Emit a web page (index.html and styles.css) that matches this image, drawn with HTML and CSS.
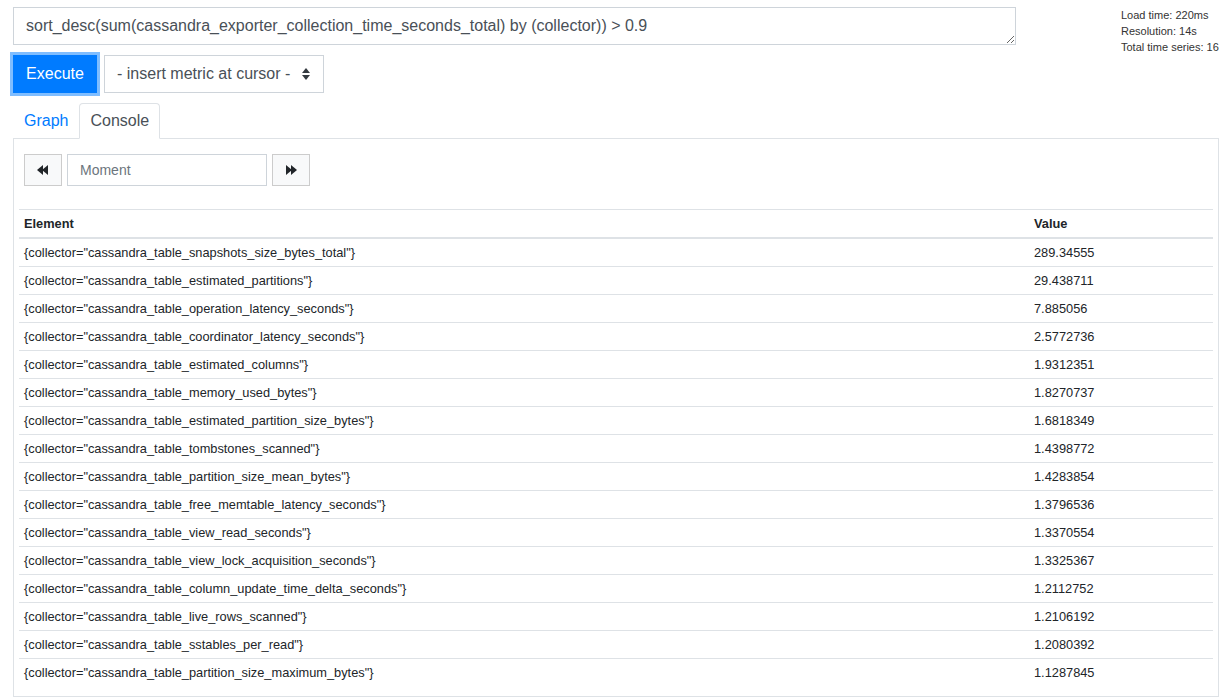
FILE: index.html
```html
<!DOCTYPE html>
<html lang="en">
  <head>
    <meta charset="utf-8">
    <title>Prometheus Time Series Collection and Processing Server</title>
    <link rel="stylesheet" href="styles.css">
  </head>
  <body>
    <div class="query-row">
      <div class="query-main">
        <textarea class="form-control expression" rows="1">sort_desc(sum(cassandra_exporter_collection_time_seconds_total) by (collector)) &gt; 0.9</textarea>
        <div class="query-actions">
          <button class="btn btn-primary execute">Execute</button>
          <div class="select-wrap">
            <select class="form-control metric-select">
              <option>- insert metric at cursor -</option>
            </select>
            <svg class="select-arrows" width="8" height="12" viewBox="0 0 8 12">
              <polygon points="4,0 8,5 0,5" fill="#343a40"/>
              <polygon points="0,7 8,7 4,12" fill="#343a40"/>
            </svg>
          </div>
        </div>
      </div>
      <div class="eval-stats">
        <div>Load time: 220ms</div>
        <div>Resolution: 14s</div>
        <div>Total time series: 16</div>
      </div>
    </div>

    <ul class="nav-tabs">
      <li><a class="nav-link" href="#graph">Graph</a></li>
      <li><a class="nav-link active" href="#console">Console</a></li>
    </ul>

    <div class="tab-content">
      <div class="moment-controls">
        <button class="btn btn-light nav-btn" title="Rewind the time">
          <svg width="12" height="10" viewBox="0 0 12 10">
            <polygon points="0,5 6,0 6,10" fill="#212529"/>
            <polygon points="5,5 11,0 11,10" fill="#212529"/>
          </svg>
        </button>
        <input class="form-control moment-input" placeholder="Moment">
        <button class="btn btn-light nav-btn" title="Advance the time">
          <svg width="12" height="10" viewBox="0 0 12 10">
            <polygon points="1,0 7,5 1,10" fill="#212529"/>
            <polygon points="6,0 12,5 6,10" fill="#212529"/>
          </svg>
        </button>
      </div>

      <table class="table">
        <thead>
          <tr><th>Element</th><th class="value-col">Value</th></tr>
        </thead>
        <tbody>
          <tr><td>{collector="cassandra_table_snapshots_size_bytes_total"}</td><td>289.34555</td></tr>
          <tr><td>{collector="cassandra_table_estimated_partitions"}</td><td>29.438711</td></tr>
          <tr><td>{collector="cassandra_table_operation_latency_seconds"}</td><td>7.885056</td></tr>
          <tr><td>{collector="cassandra_table_coordinator_latency_seconds"}</td><td>2.5772736</td></tr>
          <tr><td>{collector="cassandra_table_estimated_columns"}</td><td>1.9312351</td></tr>
          <tr><td>{collector="cassandra_table_memory_used_bytes"}</td><td>1.8270737</td></tr>
          <tr><td>{collector="cassandra_table_estimated_partition_size_bytes"}</td><td>1.6818349</td></tr>
          <tr><td>{collector="cassandra_table_tombstones_scanned"}</td><td>1.4398772</td></tr>
          <tr><td>{collector="cassandra_table_partition_size_mean_bytes"}</td><td>1.4283854</td></tr>
          <tr><td>{collector="cassandra_table_free_memtable_latency_seconds"}</td><td>1.3796536</td></tr>
          <tr><td>{collector="cassandra_table_view_read_seconds"}</td><td>1.3370554</td></tr>
          <tr><td>{collector="cassandra_table_view_lock_acquisition_seconds"}</td><td>1.3325367</td></tr>
          <tr><td>{collector="cassandra_table_column_update_time_delta_seconds"}</td><td>1.2112752</td></tr>
          <tr><td>{collector="cassandra_table_live_rows_scanned"}</td><td>1.2106192</td></tr>
          <tr><td>{collector="cassandra_table_sstables_per_read"}</td><td>1.2080392</td></tr>
          <tr><td>{collector="cassandra_table_partition_size_maximum_bytes"}</td><td>1.1287845</td></tr>
        </tbody>
      </table>
    </div>
  </body>
</html>
```

FILE: styles.css
```css
* {
  box-sizing: border-box;
}
body {
  margin: 0;
  padding: 7px 5px 0 13px;
  font-family: 'Liberation Sans', Helvetica, Arial, sans-serif;
  font-size: 16px;
  line-height: 1.5;
  color: #212529;
  background-color: #fff;
}

.query-row {
  display: grid;
  grid-template-columns: 1003px 1fr;
  column-gap: 105px;
}
.form-control {
  display: block;
  font-family: inherit;
  font-size: 16px;
  line-height: 24px;
  color: #495057;
  background-color: #fff;
  border: 1px solid #ced4da;
  border-radius: 0;
  padding: 6px 12px;
  outline: none;
}
.expression {
  width: 100%;
  height: 38px;
  resize: vertical;
  overflow: hidden;
}
.query-actions {
  display: flex;
  gap: 7px;
  margin-top: 10px;
}
.btn {
  font-family: inherit;
  font-size: 16px;
  line-height: 24px;
  border: 1px solid transparent;
  border-radius: 0;
  padding: 6px 12px;
  cursor: pointer;
}
.btn-primary {
  color: #fff;
  background-color: #007bff;
  border-color: #007bff;
}
.execute {
  height: 38px;
  width: 84px;
  box-shadow: 0 0 0 3px rgba(0, 123, 255, .5);
}
.select-wrap {
  position: relative;
}
.metric-select {
  width: 220px;
  height: 38px;
  appearance: none;
  -webkit-appearance: none;
  padding-right: 30px;
}
.select-arrows {
  position: absolute;
  right: 14px;
  top: 13px;
}
.eval-stats {
  font-size: 11px;
  line-height: 16px;
  color: #333;
}

.nav-tabs {
  display: flex;
  list-style: none;
  margin: 10px 0 0;
  padding: 0;
  border-bottom: 1px solid #dee2e6;
}
.nav-tabs li {
  margin-bottom: -1px;
}
.nav-link {
  display: block;
  padding: 5px 10px;
  border: 1px solid transparent;
  border-top-left-radius: 4px;
  border-top-right-radius: 4px;
  color: #007bff;
  text-decoration: none;
}
.nav-link.active {
  color: #495057;
  background-color: #fff;
  border-color: #dee2e6 #dee2e6 #fff;
}

.tab-content {
  border: 1px solid #dee2e6;
  border-top: none;
  padding: 0 5px 10px;
}
.moment-controls {
  display: flex;
  gap: 5px;
  padding: 15px 5px 0;
  margin-bottom: 23px;
}
.btn-light {
  background-color: #f8f9fa;
  border-color: #ccc;
}
.nav-btn {
  width: 38px;
  height: 32px;
  padding: 0;
  display: flex;
  align-items: center;
  justify-content: center;
}
.moment-input {
  width: 200px;
  height: 32px;
  font-size: 14px;
  padding: 4px 12px;
}
.moment-input::placeholder {
  color: #6c757d;
}

.table {
  width: 100%;
  border-collapse: collapse;
  font-size: 12.8px;
  line-height: 19px;
  color: #212529;
}
.table th,
.table td {
  padding: 4px 5px;
  text-align: left;
  border-top: 1px solid #dee2e6;
}
.table thead th {
  font-weight: bold;
  border-bottom: 2px solid #dee2e6;
}
.value-col {
  width: 184px;
}
```
